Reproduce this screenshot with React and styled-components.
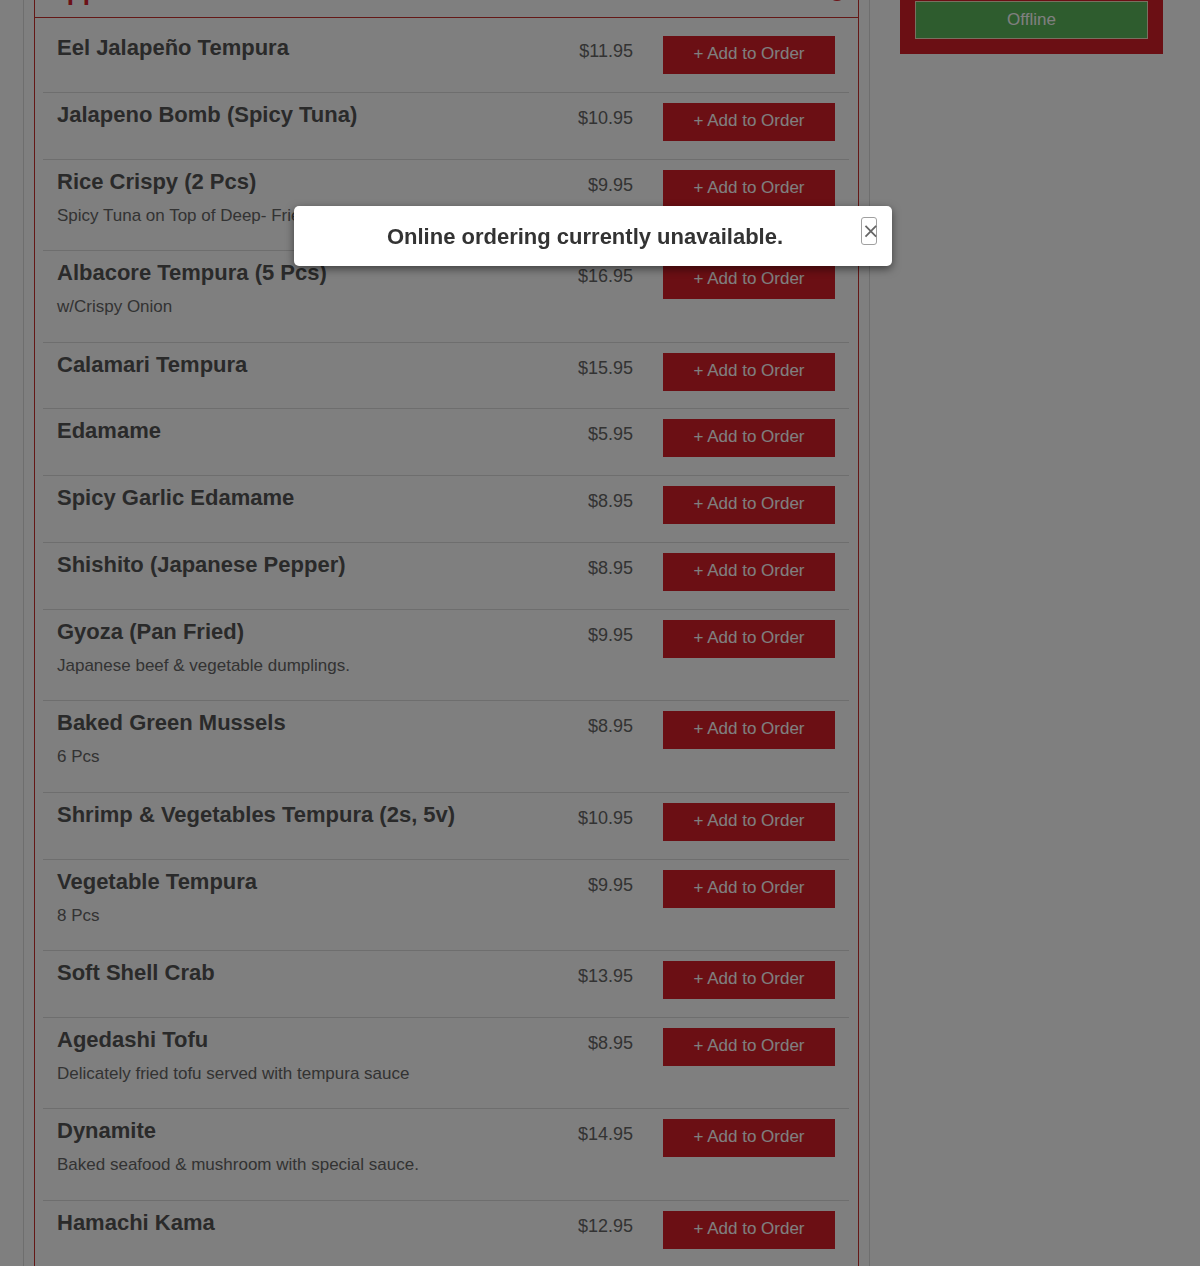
import React from "react";
import styled, { createGlobalStyle } from "styled-components";

const GlobalStyle = createGlobalStyle`
  html, body {
    margin: 0;
    padding: 0;
    overflow: hidden;
    background: #fff;
    font-family: "Liberation Sans", Arial, sans-serif;
  }
`;

const Container = styled.div`
  width: 1140px;
  margin: -60px 0 0 23px;
  display: grid;
  grid-template-columns: 847px 263px;
  column-gap: 30px;
  align-items: start;
`;

const MenuColumn = styled.div`
  border-left: 1px solid #dcdcdc;
  border-right: 1px solid #dcdcdc;
  padding: 23px 10px 0;
  min-height: 1500px;
`;

const Panel = styled.section`
  border: 1px solid #c9302c;
`;

const PanelHeader = styled.div`
  display: flex;
  align-items: center;
  justify-content: space-between;
  padding: 12px 12px 10px 13px;
  border-bottom: 1px solid #c9302c;
`;

const PanelTitle = styled.h2`
  margin: 0;
  font-size: 26px;
  line-height: 31px;
  font-weight: bold;
  color: #d9232d;
`;

const ToggleIcon = styled.span`
  width: 14px;
  height: 14px;
  border: 2px solid #d9232d;
  border-radius: 50%;
`;

const ItemList = styled.div`
  padding: 8px 9px 0 8px;
`;

const ItemRow = styled.div`
  display: grid;
  grid-template-columns: 1fr auto 172px;
  column-gap: 30px;
  align-items: start;
  padding: 11px 14px 17.8px;
  border-bottom: 1px solid #dddddd;
`;

const ItemInfo = styled.div`
  min-width: 0;
`;

const ItemName = styled.div`
  font-size: 22px;
  line-height: 22px;
  font-weight: bold;
  color: #555;
`;

const ItemDesc = styled.div`
  margin: 13px 0 6.7px;
  font-size: 17px;
  line-height: 20px;
  color: #666;
`;

const Price = styled.div`
  margin-top: 3px;
  font-size: 18px;
  line-height: 22px;
  color: #666;
  text-align: right;
`;

const AddButton = styled.button`
  margin-top: -1px;
  height: 38px;
  width: 172px;
  border: 0;
  border-radius: 0;
  background: #d61e28;
  color: #fff;
  font-family: "Liberation Sans", Arial, sans-serif;
  font-size: 17px;
  padding: 0 0 2px;
  cursor: pointer;
`;

const Sidebar = styled.aside`
  padding-top: 46px;
`;

const StatusBox = styled.div`
  background: #d61e28;
  padding: 15px;
`;

const StatusButton = styled.div`
  height: 35px;
  border: 1px solid #f0e0c0;
  background: #5cb85c;
  color: #fff;
  font-size: 17px;
  display: flex;
  align-items: center;
  justify-content: center;
  padding-bottom: 1px;
  box-sizing: content-box;
`;

const Backdrop = styled.div`
  position: fixed;
  inset: 0;
  background: rgba(0, 0, 0, 0.5);
`;

const Modal = styled.div`
  position: fixed;
  top: 206px;
  left: 294px;
  width: 598px;
  height: 60px;
  box-sizing: border-box;
  padding: 1px 15px 0;
  display: flex;
  align-items: flex-start;
  background: #fff;
  border-radius: 5px;
  box-shadow: 0 3px 9px rgba(0, 0, 0, 0.5);
`;

const ModalText = styled.p`
  flex: 1;
  margin: 0;
  line-height: 59px;
  text-align: center;
  font-size: 22px;
  font-weight: bold;
  color: #333;
`;

const CloseButton = styled.button`
  margin-top: 10px;
  width: 16px;
  height: 28px;
  padding: 0;
  border: 1px solid #a0a0a0;
  border-radius: 3px;
  background: #fff;
  color: #666;
  font-family: "DejaVu Sans", sans-serif;
  font-size: 21px;
  line-height: 24px;
  cursor: pointer;
`;

const items = [
  { name: "Eel Jalapeño Tempura", price: "$11.95" },
  { name: "Jalapeno Bomb (Spicy Tuna)", price: "$10.95" },
  { name: "Rice Crispy (2 Pcs)", price: "$9.95", desc: "Spicy Tuna on Top of Deep- Fried Rice" },
  { name: "Albacore Tempura (5 Pcs)", price: "$16.95", desc: "w/Crispy Onion" },
  { name: "Calamari Tempura", price: "$15.95" },
  { name: "Edamame", price: "$5.95" },
  { name: "Spicy Garlic Edamame", price: "$8.95" },
  { name: "Shishito (Japanese Pepper)", price: "$8.95" },
  { name: "Gyoza (Pan Fried)", price: "$9.95", desc: "Japanese beef & vegetable dumplings." },
  { name: "Baked Green Mussels", price: "$8.95", desc: "6 Pcs" },
  { name: "Shrimp & Vegetables Tempura (2s, 5v)", price: "$10.95" },
  { name: "Vegetable Tempura", price: "$9.95", desc: "8 Pcs" },
  { name: "Soft Shell Crab", price: "$13.95" },
  { name: "Agedashi Tofu", price: "$8.95", desc: "Delicately fried tofu served with tempura sauce" },
  { name: "Dynamite", price: "$14.95", desc: "Baked seafood & mushroom with special sauce." },
  { name: "Hamachi Kama", price: "$12.95" },
  { name: "Salmon Kama", price: "$12.95" },
];

function MenuItem({ item }) {
  return (
    <ItemRow>
      <ItemInfo>
        <ItemName>{item.name}</ItemName>
        {item.desc && <ItemDesc>{item.desc}</ItemDesc>}
      </ItemInfo>
      <Price>{item.price}</Price>
      <AddButton>+ Add to Order</AddButton>
    </ItemRow>
  );
}

export default function App() {
  return (
    <>
      <GlobalStyle />
      <Container>
        <MenuColumn>
          <Panel>
            <PanelHeader>
              <PanelTitle>Appetizers</PanelTitle>
              <ToggleIcon />
            </PanelHeader>
            <ItemList>
              {items.map((item) => (
                <MenuItem key={item.name} item={item} />
              ))}
            </ItemList>
          </Panel>
        </MenuColumn>
        <Sidebar>
          <StatusBox>
            <StatusButton>Offline</StatusButton>
          </StatusBox>
        </Sidebar>
      </Container>
      <Backdrop />
      <Modal>
        <ModalText>Online ordering currently unavailable.</ModalText>
        <CloseButton aria-label="Close">×</CloseButton>
      </Modal>
    </>
  );
}
